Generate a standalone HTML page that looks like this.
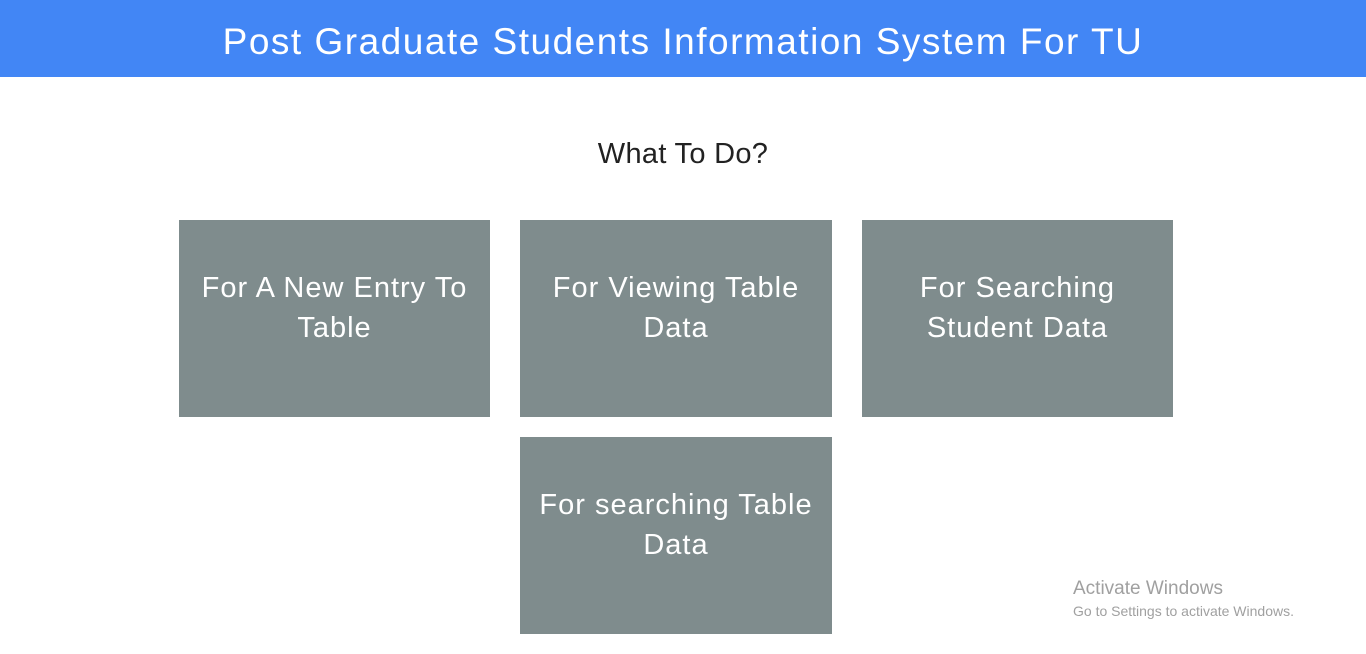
<!DOCTYPE html>
<html><head><meta charset="utf-8"><style>
body{margin:0;width:1366px;height:654px;background:#fff;font-family:"Liberation Sans",sans-serif;position:relative;overflow:hidden}
.hdr{position:absolute;left:0;top:0;width:1366px;height:77px;background:#4286f5;color:#fff;font-size:37px;text-align:center;line-height:84px;letter-spacing:1.5px}
.q{position:absolute;left:0;width:1366px;top:138px;text-align:center;font-size:29px;letter-spacing:0.3px;color:#222}
.b{position:absolute;width:311px;height:197px;background:#7f8c8d;color:#fff;font-size:29px;letter-spacing:1px;text-align:center;line-height:40px;box-sizing:border-box;padding-top:48px}
.aw{position:absolute;left:1073px;top:578px;color:#a0a0a0;font-size:19px}
.aw2{position:absolute;left:1073px;top:603px;color:#a0a0a0;font-size:14px}
</style></head><body>
<div class="hdr">Post Graduate Students Information System For TU</div>
<div class="q">What To Do?</div>
<div class="b" style="left:179px;top:220px">For A New Entry To<br>Table</div>
<div class="b" style="left:520px;top:220px;width:312px">For Viewing Table<br>Data</div>
<div class="b" style="left:862px;top:220px">For Searching<br>Student Data</div>
<div class="b" style="left:520px;top:437px;width:312px">For searching Table<br>Data</div>
<div class="aw">Activate Windows</div>
<div class="aw2">Go to Settings to activate Windows.</div>
</body></html>
